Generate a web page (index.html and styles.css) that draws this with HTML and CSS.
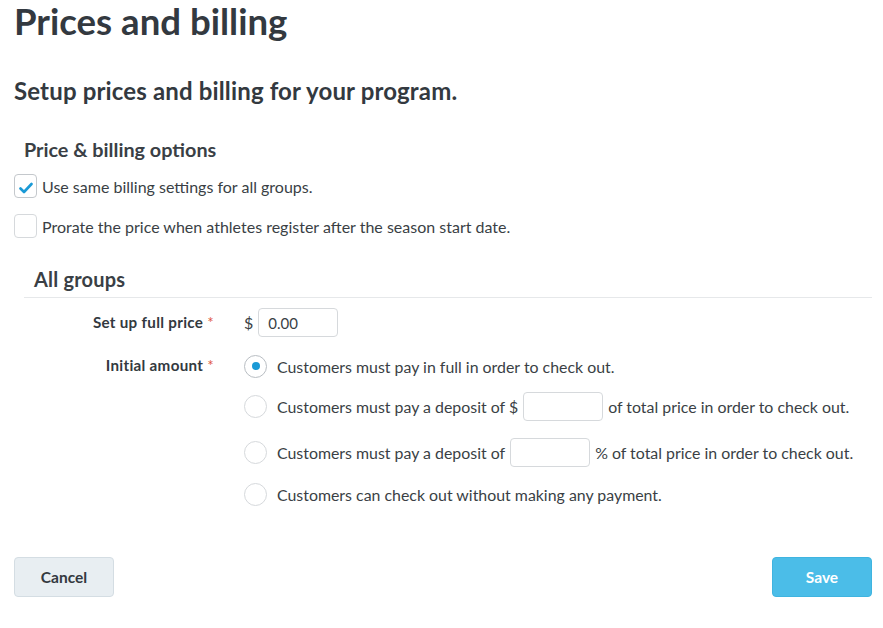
FILE: index.html
```html
<!DOCTYPE html>
<html>
<head>
<meta charset="utf-8">
<link rel="stylesheet" href="styles.css">
</head>
<body>
<div class="page">
  <h1 class="title">Prices and billing</h1>
  <h2 class="subtitle">Setup prices and billing for your program.</h2>

  <section class="options">
    <h3 class="section-title">Price &amp; billing options</h3>
    <label class="check-row">
      <span class="checkbox checked">
        <svg width="14" height="12" viewBox="0 0 14 12"><path d="M1.5 6.5 L5 10 L12.5 2" fill="none" stroke="#1a9ad6" stroke-width="2.6" stroke-linecap="round" stroke-linejoin="round"/></svg>
      </span>
      <span>Use same billing settings for all groups.</span>
    </label>
    <label class="check-row">
      <span class="checkbox"></span>
      <span>Prorate the price when athletes register after the season start date.</span>
    </label>
  </section>

  <section class="groups">
    <h3 class="groups-title">All groups</h3>
    <div class="form">
      <div class="form-row">
        <div class="label">Set up full price <span class="req">*</span></div>
        <div class="field price-field">
          <span class="currency">$</span>
          <span class="input price-input">0.00</span>
        </div>
      </div>
      <div class="form-row radios-row">
        <div class="label">Initial amount <span class="req">*</span></div>
        <div class="field radios">
          <div class="radio-row">
            <span class="radio selected"></span>
            <span class="opt">Customers must pay in full in order to check out.</span>
          </div>
          <div class="radio-row">
            <span class="radio"></span>
            <span class="opt">
              <span>Customers must pay a deposit of $</span>
              <span class="input small-input"></span>
              <span>of total price in order to check out.</span>
            </span>
          </div>
          <div class="radio-row">
            <span class="radio"></span>
            <span class="opt">
              <span>Customers must pay a deposit of</span>
              <span class="input small-input"></span>
              <span>% of total price in order to check out.</span>
            </span>
          </div>
          <div class="radio-row">
            <span class="radio"></span>
            <span class="opt">Customers can check out without making any payment.</span>
          </div>
        </div>
      </div>
    </div>
  </section>

  <div class="actions">
    <button class="btn btn-cancel">Cancel</button>
    <button class="btn btn-save">Save</button>
  </div>
</div>
</body>
</html>
```

FILE: styles.css
```css
* { box-sizing: border-box; }
html, body { margin: 0; padding: 0; background: #fff; }
body {
  font-family: Lato, "Open Sans", "Liberation Sans", sans-serif;
  color: #3a3f45;
}
.page {
  width: 883px;
  padding: 0 11px 0 14px;
}
.title {
  margin: 0;
  padding-top: 0;
  font-size: 36.6px;
  font-weight: 700;
  line-height: 42px;
  color: #333940;
}
.subtitle {
  margin: 34px 0 0;
  font-size: 24px;
  font-weight: 700;
  line-height: 30px;
  letter-spacing: 0.15px;
  color: #333940;
}
.options {
  margin-top: 30px;
}
.section-title {
  margin: 0 0 0 10px;
  font-size: 19.8px;
  font-weight: 700;
  line-height: 26px;
}
.check-row {
  display: flex;
  align-items: center;
  gap: 5px;
  font-size: 16px;
  height: 24px;
  margin-top: 12px;
}
.check-row + .check-row { margin-top: 16px; }
.checkbox {
  width: 23px;
  height: 24px;
  border: 1px solid #d6d9dc;
  border-radius: 4px;
  display: flex;
  align-items: center;
  justify-content: center;
  background: #fff;
  flex-shrink: 0;
}
.checkbox.checked { border-color: #c4c8cc; }
.checkbox svg { margin-top: 3px; }
.groups {
  margin-top: 28px;
  margin-left: 10px;
}
.groups-title {
  margin: 0;
  padding-left: 10px;
  font-size: 20px;
  font-weight: 700;
  line-height: 26px;
  letter-spacing: 0.2px;
  padding-bottom: 5px;
  border-bottom: 1px solid #e6e8ea;
}
.form { margin-top: 10px; }
.form-row {
  display: grid;
  grid-template-columns: 220px 1fr;
}
.label {
  text-align: right;
  padding-right: 30px;
  font-size: 15.2px;
  font-weight: 700;
  letter-spacing: 0.3px;
  color: #333940;
  line-height: 28px;
}
.req { color: #e0563f; font-weight: 400; }
.price-field {
  display: flex;
  align-items: center;
  gap: 5px;
  font-size: 16px;
}
.input {
  display: inline-flex;
  align-items: center;
  border: 1px solid #d6d9dc;
  border-radius: 4px;
  height: 29px;
  background: #fff;
}
.price-input {
  width: 80px;
  padding-left: 9px;
  font-size: 15px;
  color: #3a3f45;
}
.radios-row { margin-top: 14px; }
.radio-row {
  display: flex;
  align-items: center;
  gap: 10px;
  font-size: 15.9px;
  height: 30px;
}
.radio-row:nth-child(1) { margin-bottom: 10px; }
.radio-row:nth-child(2) { margin-bottom: 16px; }
.radio-row:nth-child(3) { margin-bottom: 12px; }
.opt {
  display: inline-flex;
  align-items: center;
  gap: 5px;
}
.radio {
  width: 23px;
  height: 23px;
  border: 1px solid #d6d9dc;
  border-radius: 50%;
  display: inline-flex;
  align-items: center;
  justify-content: center;
  flex-shrink: 0;
}
.radio.selected { border-color: #b9bec3; }
.radio.selected::after {
  content: "";
  width: 8px;
  height: 8px;
  border-radius: 50%;
  background: #1a9ad6;
}
.small-input { width: 80px; }
.actions {
  display: flex;
  justify-content: space-between;
  margin-top: 48px;
}
.btn {
  width: 100px;
  height: 40px;
  border-radius: 4px;
  font-family: inherit;
  font-size: 15.5px;
  font-weight: 700;
  cursor: pointer;
}
.btn-cancel {
  background: #e8eef2;
  border: 1px solid #d4dde3;
  color: #333940;
}
.btn-save {
  background: #4bbde8;
  border: 1px solid #3fb4e0;
  color: #fff;
}
```
